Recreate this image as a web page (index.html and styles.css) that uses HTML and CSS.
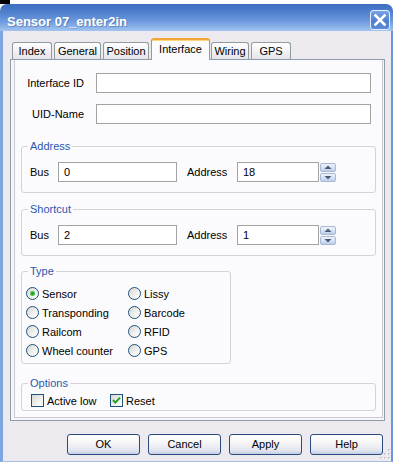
FILE: index.html
```html
<!DOCTYPE html>
<html lang="en">
<head>
<meta charset="utf-8">
<title>Sensor 07_enter2in</title>
<link rel="stylesheet" href="styles.css">
</head>
<body>
<div class="topmark"></div>
<div class="window">
  <div class="titlebar">
    <span class="title">Sensor 07_enter2in</span>
    <div class="close">
      <svg width="18" height="18" viewBox="0 0 18 18"><path d="M4.5 4.5 L13.5 13.5 M13.5 4.5 L4.5 13.5" stroke="#fff" stroke-width="2.6" stroke-linecap="square" fill="none"/></svg>
    </div>
  </div>
  <div class="frame">
    <div class="tabs">
      <div class="tab t-index">Index</div>
      <div class="tab t-general">General</div>
      <div class="tab t-position">Position</div>
      <div class="tab t-interface active">Interface</div>
      <div class="tab t-wiring">Wiring</div>
      <div class="tab t-gps">GPS</div>
    </div>
    <div class="panel">
      <div class="page">
        <div class="idgrid">
          <span class="idlabel">Interface ID</span><div class="input wide"></div>
          <span class="idlabel">UID-Name</span><div class="input wide"></div>
        </div>

        <fieldset class="group g-wide g-address">
          <legend>Address</legend>
          <div class="addr-row">
            <span class="lbl-bus">Bus</span><div class="input bus">0</div>
            <span class="lbl-addr">Address</span><div class="input addr">18</div>
            <div class="spin">
              <div class="spinbtn"><svg width="14" height="7" viewBox="0 0 14 7"><path d="M3.5 5 L7 1.5 L10.5 5 Z" fill="#4a5a78"/></svg></div>
              <div class="spinbtn"><svg width="14" height="7" viewBox="0 0 14 7"><path d="M3.5 2 L7 5.5 L10.5 2 Z" fill="#4a5a78"/></svg></div>
            </div>
          </div>
        </fieldset>

        <fieldset class="group g-wide g-shortcut">
          <legend>Shortcut</legend>
          <div class="addr-row">
            <span class="lbl-bus">Bus</span><div class="input bus">2</div>
            <span class="lbl-addr">Address</span><div class="input addr">1</div>
            <div class="spin">
              <div class="spinbtn"><svg width="14" height="7" viewBox="0 0 14 7"><path d="M3.5 5 L7 1.5 L10.5 5 Z" fill="#4a5a78"/></svg></div>
              <div class="spinbtn"><svg width="14" height="7" viewBox="0 0 14 7"><path d="M3.5 2 L7 5.5 L10.5 2 Z" fill="#4a5a78"/></svg></div>
            </div>
          </div>
        </fieldset>

        <fieldset class="group g-type">
          <legend>Type</legend>
          <div class="radios">
            <div class="ritem"><span class="radio on"></span>Sensor</div>
            <div class="ritem"><span class="radio"></span>Lissy</div>
            <div class="ritem"><span class="radio"></span>Transponding</div>
            <div class="ritem"><span class="radio"></span>Barcode</div>
            <div class="ritem"><span class="radio"></span>Railcom</div>
            <div class="ritem"><span class="radio"></span>RFID</div>
            <div class="ritem"><span class="radio"></span>Wheel counter</div>
            <div class="ritem"><span class="radio"></span>GPS</div>
          </div>
        </fieldset>

        <fieldset class="group g-wide g-options">
          <legend>Options</legend>
          <div class="checks">
            <div class="citem c-first"><span class="check"></span>Active low</div>
            <div class="citem"><span class="check"><svg width="11" height="11" viewBox="0 0 11 11"><path d="M2 5 L4.3 7.6 L9 2.6" stroke="#21a121" stroke-width="2" fill="none"/></svg></span>Reset</div>
          </div>
        </fieldset>
      </div>
    </div>
    <div class="buttons">
      <div class="btn">OK</div>
      <div class="btn">Cancel</div>
      <div class="btn">Apply</div>
      <div class="btn">Help</div>
    </div>
    <div class="grip">
      <svg width="12" height="12" viewBox="0 0 12 12">
        <g fill="#c4c4c8">
          <rect x="9" y="1" width="2" height="2"/>
          <rect x="5" y="5" width="2" height="2"/><rect x="9" y="5" width="2" height="2"/>
          <rect x="1" y="9" width="2" height="2"/><rect x="5" y="9" width="2" height="2"/><rect x="9" y="9" width="2" height="2"/>
        </g>
        <g fill="#ffffff">
          <rect x="10" y="2" width="1" height="1"/>
          <rect x="6" y="6" width="1" height="1"/><rect x="10" y="6" width="1" height="1"/>
          <rect x="2" y="10" width="1" height="1"/><rect x="6" y="10" width="1" height="1"/><rect x="10" y="10" width="1" height="1"/>
        </g>
      </svg>
    </div>
  </div>
</div>
</body>
</html>
```

FILE: styles.css
```css
* { box-sizing: border-box; }

html, body {
  margin: 0;
  padding: 0;
  background: #ffffff;
}

body {
  font-family: "Liberation Sans", Arial, sans-serif;
  font-size: 11px;
  color: #000;
  width: 399px;
  height: 467px;
  overflow: hidden;
}

.topmark {
  width: 10px;
  height: 4px;
  background: #000;
}

.window {
  width: 393px;
}

.titlebar {
  height: 27px;
  display: flex;
  align-items: flex-start;
  justify-content: space-between;
  border-radius: 7px 7px 0 0;
  background: linear-gradient(to bottom, #3c6dbf 0%, #4f80cd 30%, #6e9ade 65%, #a2c4f0 100%);
}

.title {
  margin: 10px 0 0 7px;
  font-weight: bold;
  font-size: 13px;
  line-height: 15px;
  color: #ffffff;
  text-shadow: 1px 1px 0 rgba(30, 60, 120, 0.35);
}

.close {
  width: 20px;
  height: 20px;
  margin: 6px 3px 0 0;
  border: 1px solid #e4eeff;
  border-radius: 3px;
  background: linear-gradient(to bottom, #7aa3e4 0%, #4f80cf 55%, #5b8bd6 100%);
  display: flex;
  align-items: center;
  justify-content: center;
}

.frame {
  position: relative;
  height: 431px;
  background: #eceaef;
  border-left: 3px solid #7fa5e0;
  border-right: 2px solid #6c96dc;
  border-bottom: 1px solid #a8bfe2;
  padding-top: 7px;
}

.tabs {
  display: flex;
  align-items: flex-end;
  height: 21px;
  margin-left: 9px;
  position: relative;
  z-index: 2;
}

.tab {
  height: 17px;
  border: 1px solid #919b9c;
  border-bottom: none;
  border-radius: 3px 3px 0 0;
  background: linear-gradient(to bottom, #ffffff 0%, #f3f3f5 50%, #e3e3e9 100%);
  line-height: 16px;
  text-align: center;
  white-space: nowrap;
  margin-right: 2px;
}

.t-index { width: 40px; }
.t-general { width: 47px; }
.t-position { width: 46px; }
.t-interface { width: 59px; margin-right: 1px; }
.t-wiring { width: 38px; }
.t-gps { width: 40px; }

.tab.active {
  height: 22px;
  margin-bottom: -1px;
  border-top: 2px solid #f0a43a;
  background: #fbfbfd;
  padding-top: 1px;
  box-shadow: inset 0 1px 0 #ffd47a;
}

.panel {
  width: 375px;
  margin-left: 7px;
  border: 1px solid #8f9ba8;
  padding: 0 1px 2px 3px;
  background: #f6f6f9;
}

.page {
  height: 358px;
  background: #fbfbfd;
  border-left: 1px solid #c9c9d2;
  border-right: 1px solid #c9c9d2;
  border-bottom: 1px solid #c9c9d2;
  padding-top: 13px;
}

.idgrid {
  display: grid;
  grid-template-columns: 69px 275px;
  grid-auto-rows: 20px;
  column-gap: 12px;
  row-gap: 11px;
  margin-bottom: 16px;
}

.idlabel {
  text-align: right;
  line-height: 20px;
  white-space: nowrap;
}

.input {
  height: 20px;
  border: 1px solid #a3a3a6;
  background: #ffffff;
  line-height: 18px;
  padding-left: 5px;
}

.group {
  margin: 0 0 0 6px;
  padding: 0;
  border: 1px solid #d3d3d8;
  border-radius: 3px;
  min-width: 0;
}

.group legend {
  margin-left: 6px;
  padding: 0 2px;
  line-height: 12px;
  color: #2a58ad;
}

.g-wide { width: 355px; }

.g-address { margin-bottom: 10px; }
.g-shortcut { margin-bottom: 9px; }
.g-type { width: 210px; margin-bottom: 13px; }

.addr-row {
  display: flex;
  align-items: center;
  height: 20px;
  margin: 10px 0 10px 8px;
}

.lbl-bus { width: 28px; }
.bus { width: 119px; }
.lbl-addr { width: 50px; margin-left: 10px; }
.addr { width: 82px; }

.spin {
  margin-left: 1px;
  width: 16px;
  height: 19px;
  display: flex;
  flex-direction: column;
  justify-content: space-between;
}

.spinbtn {
  height: 9px;
  border: 1px solid #aab9d3;
  border-radius: 2px;
  background: linear-gradient(to bottom, #eef2fb 0%, #d3dff2 60%, #bccde9 100%);
  display: flex;
  align-items: center;
  justify-content: center;
}

.radios {
  display: grid;
  grid-template-columns: 102px auto;
  grid-auto-rows: 19px;
  padding: 7px 0 3px 4px;
}

.ritem, .citem {
  display: flex;
  align-items: center;
  gap: 3px;
  white-space: nowrap;
}

.radio {
  width: 13px;
  height: 13px;
  border: 1px solid #1c5180;
  border-radius: 50%;
  background: linear-gradient(135deg, #d6d6d2 0%, #f2f2ef 60%, #ffffff 100%);
  flex: none;
}

.radio.on {
  background:
    radial-gradient(circle, #1e9e1e 0, #2fb52f 1.6px, #7dd47d 2.4px, rgba(255,255,255,0) 3px),
    linear-gradient(135deg, #d6d6d2 0%, #f2f2ef 60%, #ffffff 100%);
}

.checks {
  display: flex;
  align-items: center;
  height: 15px;
  margin: 4px 0 2px 9px;
}

.c-first { width: 79px; }

.check {
  width: 13px;
  height: 13px;
  border: 1px solid #1c5180;
  background: linear-gradient(135deg, #d6d6d2 0%, #f2f2ef 60%, #ffffff 100%);
  flex: none;
  display: flex;
  align-items: center;
  justify-content: center;
}

.buttons {
  display: flex;
  justify-content: flex-end;
  gap: 8px;
  margin-top: 13px;
  padding-right: 8px;
}

.btn {
  width: 73px;
  height: 21px;
  border: 1px solid #2a4a80;
  border-radius: 3px;
  background: linear-gradient(to bottom, #ffffff 0%, #f4f4f6 45%, #e2e6ef 80%, #c4cfe4 100%);
  text-align: center;
  line-height: 19px;
}

.grip {
  position: absolute;
  right: 0;
  bottom: 1px;
  width: 12px;
  height: 12px;
}
```
